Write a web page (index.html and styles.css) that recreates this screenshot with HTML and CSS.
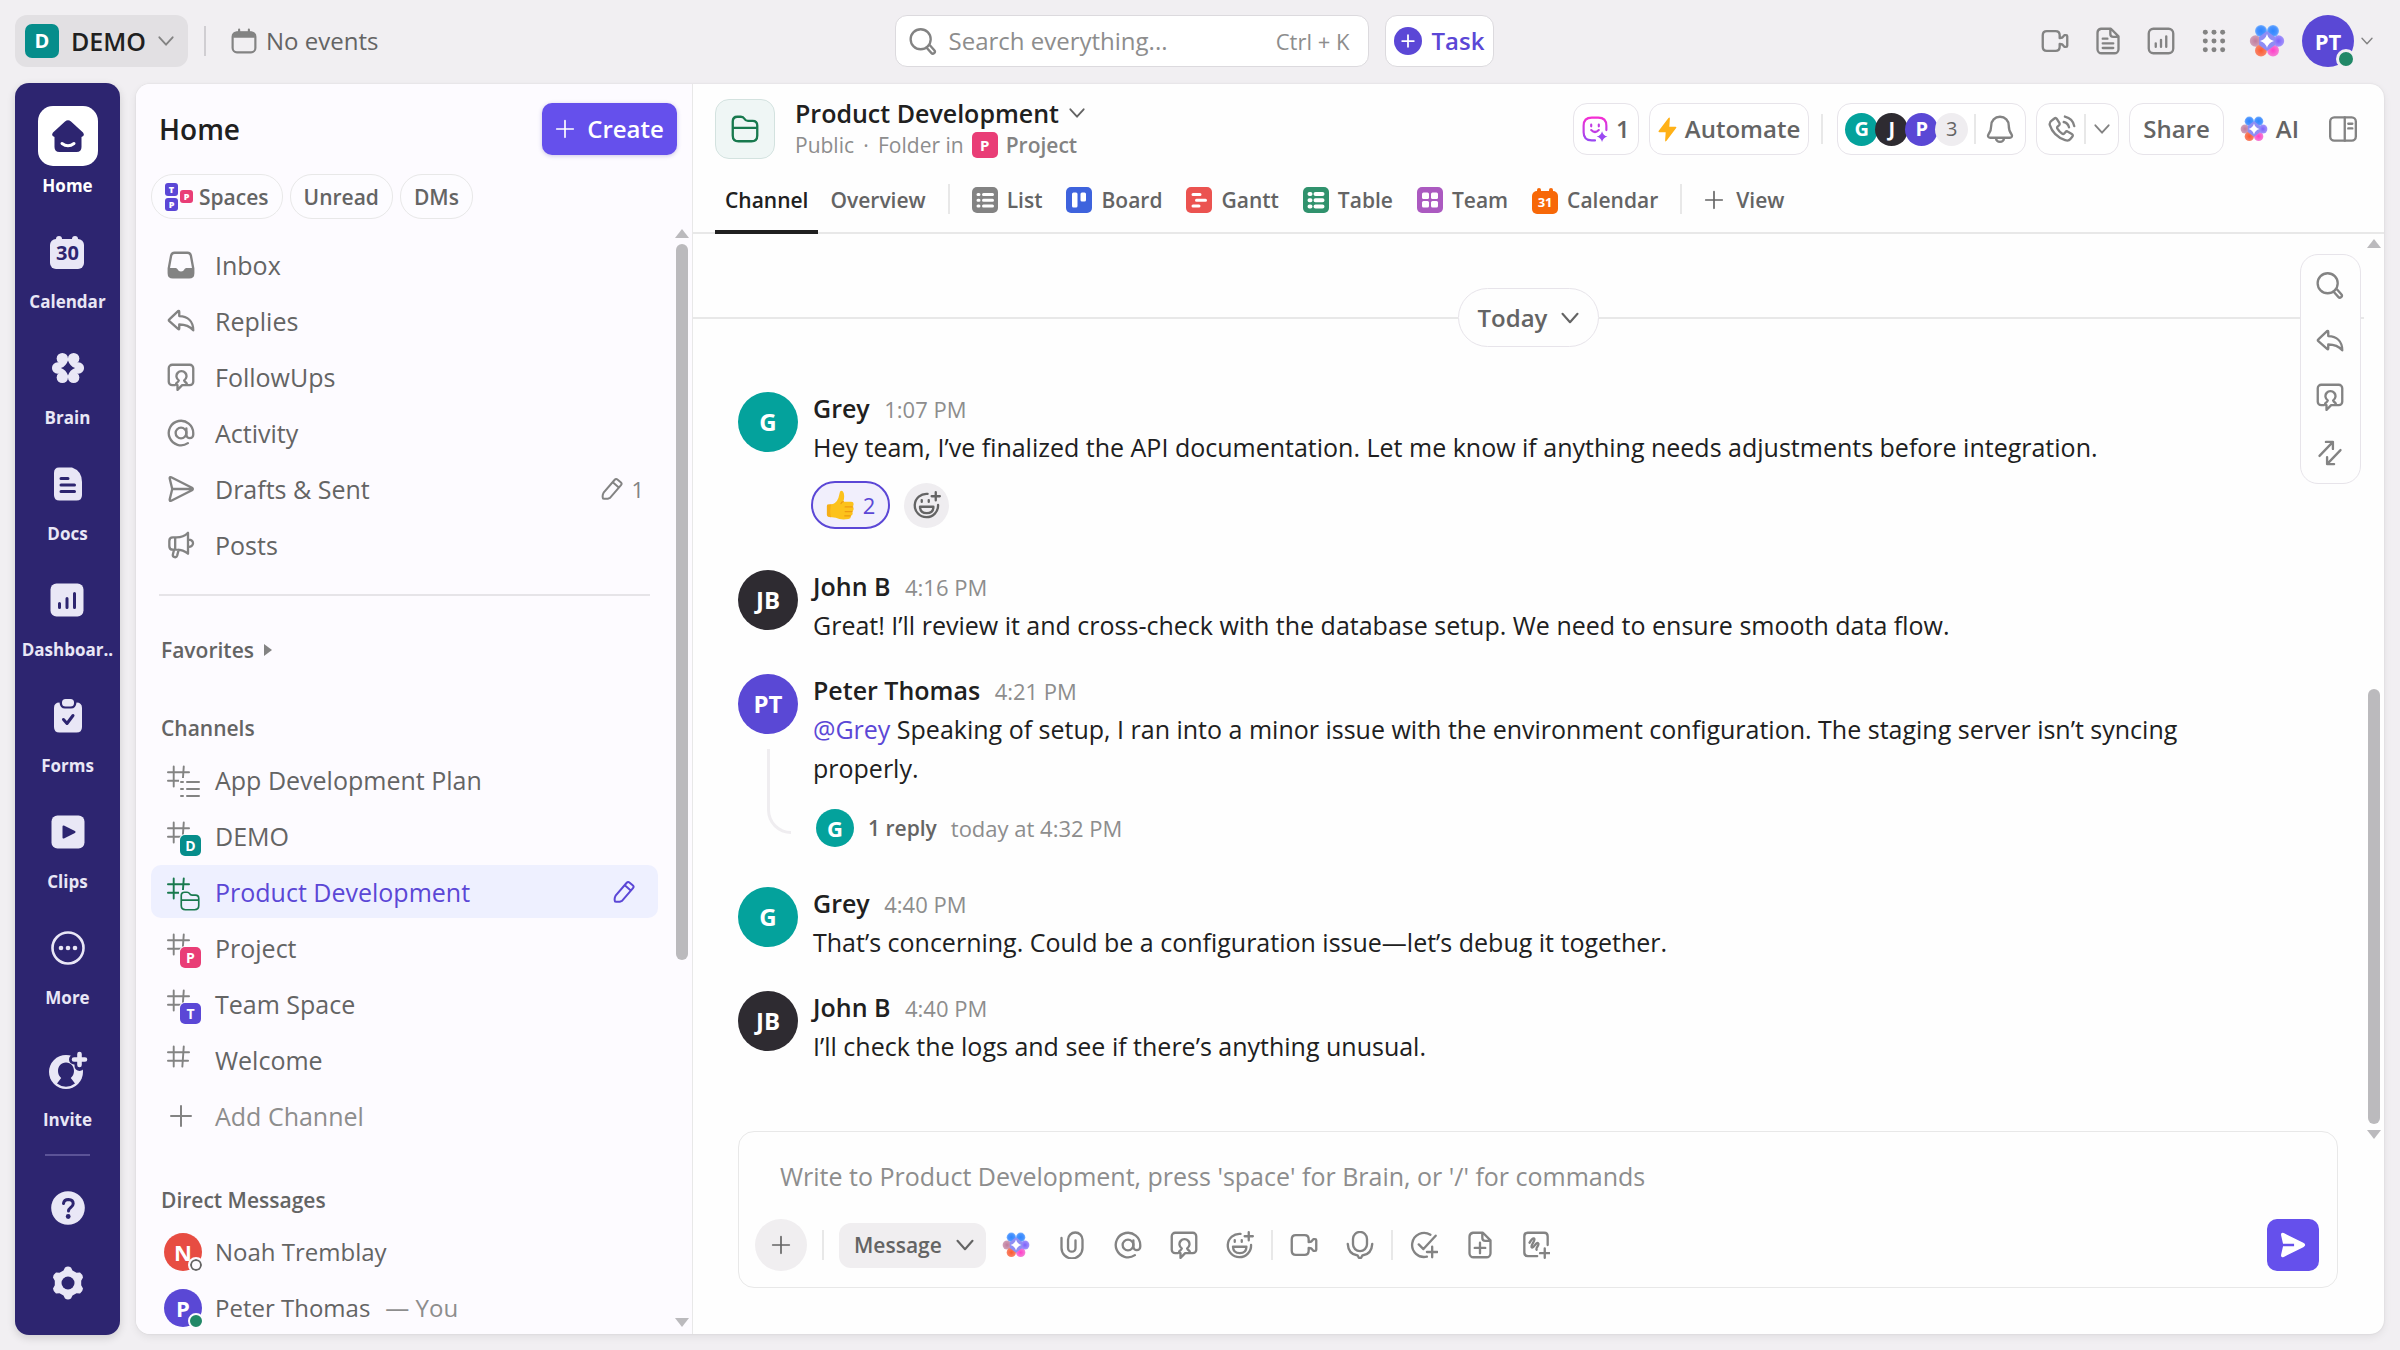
FILE: index.html
```html
<!DOCTYPE html>
<html lang="en">
<head>
<meta charset="utf-8">
<meta name="viewport" content="width=device-width, initial-scale=1">
<title>Product Development</title>
<link rel="stylesheet" href="styles.css">
</head>
<body>
<svg class="sprite" aria-hidden="true">
  <defs>
    <radialGradient id="g-blue"><stop offset="0" stop-color="#2f86ff"/><stop offset=".7" stop-color="#4a94ff"/><stop offset="1" stop-color="#7db4ff"/></radialGradient>
    <radialGradient id="g-violet"><stop offset="0" stop-color="#7d63fb"/><stop offset="1" stop-color="#a394fb"/></radialGradient>
    <radialGradient id="g-pink"><stop offset="0" stop-color="#ff3fc8"/><stop offset="1" stop-color="#f57fd6"/></radialGradient>
    <radialGradient id="g-orange"><stop offset="0" stop-color="#fb5a30"/><stop offset="1" stop-color="#f98468"/></radialGradient>
    <radialGradient id="g-mauve"><stop offset="0" stop-color="#c07b9c"/><stop offset="1" stop-color="#d0a0b8"/></radialGradient>
    <linearGradient id="g-face" x1="0" y1="0" x2="0" y2="1"><stop offset="0" stop-color="#f42fd3"/><stop offset="1" stop-color="#9a48f2"/></linearGradient>
  </defs>
  <symbol id="chevron" viewBox="0 0 12 12"><path d="M1 3.2l5 5.6 5-5.6"/></symbol>
  <symbol id="plus" viewBox="0 0 24 24"><path d="M12 2v20M2 12h20"/></symbol>
  <symbol id="calendar" viewBox="0 0 24 24"><rect x="1.5" y="4" width="21" height="18.5" rx="4"/><path class="fill" d="M2 9V7q0-3.500 3.500-3.500h13Q22 3.500 22 7v2z"/><path d="M7.500 1.500v4M16.500 1.500v4"/></symbol>
  <symbol id="search" viewBox="0 0 24 24"><circle cx="10" cy="10.500" r="8.600"/><path d="M15.500 18.200l3.600 4a1.700 1.700 0 0 0 2.600-2.300l-3.600-4"/></symbol>
  <symbol id="video" viewBox="0 0 24 24"><path d="M5 3.500h7.500q3.500 0 3.500 3.500v2.500l2.300-.5 1.700-2h1.500q1 0 1 1v8q0 1-1 1H20l-1.700-2-2.300-.5V17q0 3.500-3.500 3.500H5q-3.500 0-3.500-3.500V7Q1.500 3.500 5 3.500z"/></symbol>
  <symbol id="doc" viewBox="0 0 24 24"><path d="M6 1.500h8.500l6.500 6.500v11a3.500 3.500 0 0 1-3.500 3.500h-11A3.500 3.500 0 0 1 3 19V5a3.500 3.500 0 0 1 3-3.500zM14 2v4q0 2.500 2.500 2.500h4M7.500 10h4M7.500 14h9M7.500 18h9"/></symbol>
  <symbol id="chart" viewBox="0 0 24 24"><rect x="1.500" y="1.500" width="21" height="21" rx="4"/><path d="M7.500 17v-3M12 17v-6M16.500 17V8"/></symbol>
  <symbol id="grid" viewBox="0 0 24 24"><g class="fill"><circle cx="4" cy="4" r="2.300"/><circle cx="12" cy="4" r="2.300"/><circle cx="20" cy="4" r="2.300"/><circle cx="4" cy="12" r="2.300"/><circle cx="12" cy="12" r="2.300"/><circle cx="20" cy="12" r="2.300"/><circle cx="4" cy="20" r="2.300"/><circle cx="12" cy="20" r="2.300"/><circle cx="20" cy="20" r="2.300"/></g></symbol>
  <symbol id="brain" viewBox="0 0 36 36"><g stroke="none"><circle cx="6.500" cy="18" r="5.700" fill="url(#g-mauve)"/><circle cx="12" cy="27.500" r="6" fill="url(#g-orange)"/><circle cx="24" cy="27.500" r="6" fill="url(#g-pink)"/><circle cx="29.500" cy="18" r="5.700" fill="url(#g-violet)"/><circle cx="12" cy="8" r="6" fill="url(#g-blue)"/><circle cx="24" cy="8" r="6" fill="url(#g-blue)"/><path fill="#8f8df4" d="M18 8l8 6v8l-8 6-8-6v-8z"/><path fill="#fff" d="M18 11q1.500 5.500 7 7-5.500 1.500-7 7-1.500-5.500-7-7 5.500-1.500 7-7z"/></g></symbol>
  <symbol id="at" viewBox="0 0 24 24"><circle cx="12" cy="12" r="4.600"/><path d="M16.600 8v5.500a2.900 2.900 0 0 0 5.900 0V12a10.500 10.500 0 1 0-4.600 8.700"/></symbol>
  <symbol id="follow" viewBox="0 0 24 24"><path d="M6.500 19H4.500a3 3 0 0 1-3-3V4.500a3 3 0 0 1 3-3h15a3 3 0 0 1 3 3V16a3 3 0 0 1-3 3H13l-4 4v-4c-1.600 0-1.500-1.500-.5-2.100 1-.7 1.500-1.200 1.600-2A4.300 4.300 0 1 1 14.700 14.900c.2.800.8 1.300 1.700 2 .9.700.7 2.100-.6 2.100"/></symbol>
  <symbol id="reply" viewBox="0 0 24 24"><path d="M9.500 3.500q1-.6 1 .8v3.500c7 .2 12 4.200 12 12.200-3-3.500-6-5-12-5v3.200q0 1.400-1 .6L2 12.200q-.9-.8 0-1.600z"/></symbol>
  <symbol id="sent" viewBox="0 0 24 24"><path d="M2.300 3q-.2-1.600 1.300-1L21.400 11q1.500 1 0 2L3.600 22q-1.500.6-1.300-1L4.500 12zM4.500 12h17"/></symbol>
  <symbol id="posts" viewBox="0 0 24 24"><path d="M8 5.500c4 0 7.200-1 10-4v18c-2.800-2.500-6-3.500-10-3.500H5q-3 0-3-3V8.500q0-3 3-3zM7 5.500V16M18 7.500c2.500-.4 4.300 1 4.300 3s-1.800 3.400-4.300 3M6 16l-1 4.300a1.900 1.900 0 0 0 3.700.8l1.300-5"/></symbol>
  <symbol id="inbox" viewBox="0 0 24 24"><path d="M6.500 1.500h11q2.500 0 3 2.500l2 11v4q0 3.500-3.500 3.500H5Q1.500 22.500 1.500 19v-4l2-11q.5-2.500 3-2.500z"/><path class="fill" d="M1.500 14.500h6q1.200 0 1.700 1.300.6 1.700 2.800 1.700t2.800-1.700q.5-1.300 1.700-1.300h6V19q0 3.500-3.500 3.500H5Q1.500 22.500 1.500 19z"/></symbol>
  <symbol id="pencil" viewBox="0 0 24 24"><path d="M3 21.500q-1-3 .6-5.800L14.500 3q1.500-1.700 3.200-.3l3 2.500q1.700 1.400.3 3L10 20.800Q6.500 22.500 3 21.500zM12.800 5.200l5.700 5"/></symbol>
  <symbol id="hash" viewBox="0 0 24 24"><path d="M7 1.500v21M17.500 1.500l-1.500 21M1 7.500h22M1 16.500h21"/></symbol>
  <symbol id="list" viewBox="0 0 20 20"><path d="M7 3h12M7 10h12M7 17h12M1 3h2M1 10h2M1 17h2"/></symbol>
  <symbol id="folder" viewBox="0 0 24 24"><path d="M1.500 17.500V5.500q0-4 4-4h3q2 0 3 1.700 1 1.800 3 1.800h4q4 0 4 4v8.500q0 5-5 5h-11q-5 0-5-5zM1.500 11h21"/></symbol>
  <symbol id="face" viewBox="0 0 24 24"><path stroke="url(#g-face)" d="M12 22.500h-3q-7.500 0-7.500-7.500V9q0-7.500 7.500-7.500h6q7.500 0 7.500 7.500v4"/><path stroke="#c13ce4" d="M8.500 8v1.500M15.500 8v1.500M8.500 13q3.500 3.500 7 0"/><path fill="#9a48f2" stroke="none" d="M18.500 14q1 4 5 5-4 1-5 5-1-4-5-5 4-1 5-5z"/></symbol>
  <symbol id="bolt" viewBox="0 0 20 26"><path fill="#ffb117" stroke="none" d="M11 .8q1.500-1.300 1.500.8l-.6 8.400h6.500q1.500.2.700 1.500L9 24.800q-1.500 1.700-1.500-.5l.6-8.300H1.500Q0 15.700.8 14.400z"/></symbol>
  <symbol id="bell" viewBox="0 0 24 24"><path d="M12 1.500c-4.500 0-7.500 3.500-7.500 7.500 0 4-.8 5.500-2.300 7.500-1 1.500-.5 3 1.300 3h17c1.800 0 2.300-1.500 1.300-3-1.500-2-2.300-3.500-2.300-7.500 0-4-3-7.500-7.500-7.500zM8.500 20q.5 3 3.500 3t3.500-3"/></symbol>
  <symbol id="phone" viewBox="0 0 24 24"><path d="M3.500 4.500 5.500 3q1.300-1 2.200.5l2 3.200q.7 1.300-.3 2.200l-1.200 1q-.8.900 0 2 1.500 2.500 3.800 4 1 .7 1.900 0l1-1.200q1-1.200 2.200-.4l3.300 2q1.500 1 .4 2.300l-1.600 2q-1.500 2-4.500 1Q4.500 18 1.500 8.500q-.5-2.500 2-4zM13.500 6q3.500.8 4.500 4.500M14.500 1.300q6.800 1.500 8 8.200"/></symbol>
  <symbol id="panel" viewBox="0 0 24 24"><rect x="1" y="2" width="22" height="20" rx="3.500"/><path d="M13.500 2v20M16.500 7.500h3.500M16.500 11.500h3.500"/></symbol>
  <symbol id="swap" viewBox="0 0 24 24"><path d="M3 14.500 14.500 2.500M8.500 2.500h6v6M21 9.500 9.500 21.500M15.500 21.500h-6v-6"/></symbol>
  <symbol id="clip" viewBox="0 0 24 24"><path d="M3 6v8.500a9 9 0 0 0 18 0V7.500a6.200 6.200 0 0 0-12.400 0v7a3.200 3.200 0 0 0 6.400 0V8"/></symbol>
  <symbol id="smile" viewBox="0 0 24 24"><path d="M12.500 2.500A10 10 0 1 0 21.500 12M7.500 7.800v1.500M13.500 7.800v1.500M6 13.500h11.500q0 5.500-5.700 5.500T6 13.500zM19.500 1v7M16 4.500h7"/></symbol>
  <symbol id="mic" viewBox="0 0 24 24"><rect x="6" y=".8" width="12" height="16.500" rx="6"/><path d="M1.500 11q.5 9 8.500 10l1 2h2l1-2q8-1 8.500-10"/></symbol>
  <symbol id="taskplus" viewBox="0 0 24 24"><path d="M14.500 22A10.300 10.300 0 1 1 17.500 3.200M7.500 11.500l4 4L22 4M19 13.500v9M14.500 18h9"/></symbol>
  <symbol id="docplus" viewBox="0 0 24 24"><path d="M6 1.500h8.500L21 8v11a3.500 3.500 0 0 1-3.500 3.500h-11A3.500 3.500 0 0 1 3 19V5a3.500 3.500 0 0 1 3-3.500zM14 2v4q0 2.500 2.500 2.500h4M12 10v9M7.500 14.500h9"/></symbol>
  <symbol id="board-plus" viewBox="0 0 24 24"><path d="M22 12V4.500q0-3-3-3h-14q-3 0-3 3v14q0 3 3 3h8M6.500 10q2.500-4.500 4-3.500c1.500 1.200-3.500 6-2.200 7.500s4-5 5.500-3.500-2.300 4-1.300 5.500M19.500 15v8M15.500 19h8"/></symbol>
  <symbol id="send-solid" viewBox="0 0 24 24"><path class="fill" stroke="none" d="M1 3Q.6-.2 3.500 1L21.500 10q3.500 2 0 4L3.500 23Q.6 24.200 1 21l1.800-7.800H13v-2.400H2.800z"/></symbol>
  <symbol id="home" viewBox="0 0 34 34"><path fill="#2d2570" stroke="none" d="M14 2.500q3-2.500 6 0L32 13.500q2.300 3.500-1.500 4.500v10q0 5-5 5h-17q-5 0-5-5V18Q-.3 17 2 13.500z"/><path stroke="#fff" stroke-width="3" d="M11 24.500q6 4.500 12 0"/></symbol>
  <symbol id="r-brain" viewBox="0 0 36 36"><g class="fill"><circle cx="7" cy="18" r="6"/><circle cx="12" cy="8" r="6"/><circle cx="24" cy="8" r="6"/><circle cx="29" cy="18" r="6"/><circle cx="12" cy="28" r="6"/><circle cx="24" cy="28" r="6"/><path d="M12 8h12l6 10-6 10H12L6 18z"/></g><path fill="#2d2570" stroke="none" d="M18 10q2 6 7.500 8-5.500 2-7.500 8-2-6-7.500-8 5.500-2 7.500-8z"/></symbol>
  <symbol id="r-doc" viewBox="0 0 34 34"><path class="fill" d="M8 .5h13Q31 4 31 15v13q0 5.500-5.500 5.500h-17Q3 33.500 3 28V6Q3 .5 8 .5z"/><path class="cut" d="M10 11.500h7M10 18h13.500M10 24.500h13.500"/></symbol>
  <symbol id="r-dash" viewBox="0 0 34 34"><rect class="fill" x=".5" y=".5" width="33" height="33" rx="6"/><path class="cut" d="M9.500 24.500v-4M17 24.500v-9M24.500 24.500v-14"/></symbol>
  <symbol id="r-form" viewBox="0 0 34 34"><path class="fill" d="M8.500 3.500q.5 6 5.500 6h6q5 0 5.500-6Q31 3.500 31 9v19q0 5.500-5.500 5.500h-17Q3 33.500 3 28V9q0-5.500 5.500-5.500z"/><rect class="fill" x="11" y="0" width="12" height="7.500" rx="3.500"/><path class="cut" d="M12.500 20.500l3.500 4 6-8"/></symbol>
  <symbol id="r-clip" viewBox="0 0 34 34"><rect class="fill" x=".5" y=".5" width="33" height="33" rx="6"/><path fill="#2d2570" stroke="#2d2570" stroke-width="2" d="M12.500 11.500l11 5.500-11 5.500z"/></symbol>
  <symbol id="r-more" viewBox="0 0 34 34"><circle cx="17" cy="17" r="15.500" fill="none" stroke="#e9e7f6" stroke-width="2.600"/><g class="fill"><circle cx="10" cy="17" r="2.300"/><circle cx="17" cy="17" r="2.300"/><circle cx="24" cy="17" r="2.300"/></g></symbol>
  <symbol id="r-invite" viewBox="0 0 40 40"><circle class="fill" cx="18" cy="22" r="17"/><path fill="#2d2570" stroke="none" d="M18 12.500c-5 0-8 4-8 8.500 0 3 1.200 5.200 3.200 7L9 33.500q4 3.200 9 3.200t9-3.200L22.800 28c2-1.800 3.200-4 3.200-7 0-4.500-3-8.500-8-8.500z"/><path stroke="#2d2570" stroke-width="10" d="M31.500 4v12M26 9.500h12"/><path stroke="#e9e7f6" stroke-width="4.600" d="M31.500 4v11M26 9.500h11"/></symbol>
  <symbol id="r-help" viewBox="0 0 34 34"><circle class="fill" cx="17" cy="17" r="16.800"/><path class="cut" d="M12.500 12.500q.5-4 5-4 4.700.3 4.700 4.200c0 3.500-4.700 3.800-4.700 7.300"/><circle cx="17.200" cy="25.500" r="2.400" fill="#2d2570" stroke="none"/></symbol>
  <symbol id="r-gear" viewBox="0 0 34 34"><path class="fill" d="M14 1.500q3-2 6 0l1.500 3 4 2.200 3.500-.2q2.800 2 3 5l-1.800 3.200v4.600L32 22.500q-.2 3-3 5l-3.500-.2-4 2.200-1.500 3q-3 2-6 0l-1.500-3-4-2.200-3.500.2q-2.800-2-3-5l1.800-3.200v-4.600L2 11.500q.2-3 3-5l3.500.2 4-2.200z"/><circle cx="17" cy="17" r="6.500" fill="#2d2570" stroke="none"/></symbol>
  <symbol id="thumb" viewBox="0 0 30 32"><g stroke="none"><path fill="#fcc21b" d="M14.500 1.500q3-2 4 2 1 4.500-.5 9h8.500q2.500 0 2.500 2.500t-1.500 2.800q1.800.6 1.500 2.700t-2 2.500q1.200.8.900 2.500t-2 2q.8 3-2.400 3.500-8 1.500-13.500-1.300L2 28.500q-1.500-.3-1.500-2V17q0-1.500 1.500-1.500l5-.5q5.500-3 6.500-9.500z"/><path fill="#f09a12" d="M2 15.500Q.5 15.500.5 17v9.500q0 1.700 1.500 2l3 .8q-2-6 0-14z" opacity=".5"/><path fill="none" stroke="#ed9a10" stroke-width="1.300" d="M20 18h8M20 23h7.500M19.500 27.500h6M18 12.500q-2 .3-2.500 2"/></g></symbol>
  <symbol id="v-list" viewBox="0 0 26 26"><rect width="26" height="26" rx="5" fill="#838383" stroke="none"/><path stroke="#fff" stroke-width="3" d="M6 7.500h1M6 13.200h1M6 19h1M11.500 7.500h9M11.500 13.200h9M11.500 19h9"/></symbol>
  <symbol id="v-board" viewBox="0 0 26 26"><rect width="26" height="26" rx="5" fill="#3e63dd" stroke="none"/><path fill="#fff" stroke="none" d="M6 7q0-1.500 1.500-1.500h2.500q1.500 0 1.500 1.500v12q0 1.500-1.500 1.500H7.500Q6 20.500 6 19zM14.500 7q0-1.500 1.500-1.500h2.500q1.500 0 1.500 1.500v6q0 1.500-1.500 1.500H16q-1.500 0-1.500-1.500z"/></symbol>
  <symbol id="v-gantt" viewBox="0 0 26 26"><rect width="26" height="26" rx="5" fill="#eb5350" stroke="none"/><path stroke="#fff" stroke-width="3" d="M7 7.500h7M10.500 13.200h9M7 19h6"/></symbol>
  <symbol id="v-table" viewBox="0 0 26 26"><rect width="26" height="26" rx="5" fill="#30926d" stroke="none"/><path stroke="#fff" stroke-width="4" d="M6.500 7h1M12.500 7h7M6.500 13.200h1M12.500 13.200h7M6.500 19.500h1M12.500 19.500h7"/></symbol>
  <symbol id="v-team" viewBox="0 0 26 26"><rect width="26" height="26" rx="5" fill="#ab5ac0" stroke="none"/><g fill="#fff" stroke="none"><rect x="5" y="5.500" width="7" height="6.500" rx="1.500"/><rect x="14" y="5.500" width="7" height="6.500" rx="1.500"/><rect x="5" y="14" width="7" height="6.500" rx="1.500"/><rect x="14" y="14" width="7" height="6.500" rx="1.500"/></g></symbol>
</svg>

<header class="topbar">
  <div class="topbar-left">
    <button class="workspace" type="button"><span class="badge badge-teal badge-lg">D</span><span>DEMO</span><svg class="ico chev-lg"><use href="#chevron"/></svg></button>
    <span class="vline"></span>
    <a class="events" href="#events"><svg class="ico ico-26"><use href="#calendar"/></svg>No events</a>
  </div>
  <div class="topbar-mid">
    <label class="search"><svg class="ico ico-28"><use href="#search"/></svg><input type="search" placeholder="Search everything..." aria-label="Search everything"><span class="kbd">Ctrl + K</span></label>
    <button class="task" type="button"><span class="task-dot"><svg class="ico"><use href="#plus"/></svg></span>Task</button>
  </div>
  <nav class="topbar-right" aria-label="Tools">
    <button class="tool" type="button" aria-label="Video"><svg class="ico ico-28"><use href="#video"/></svg></button>
    <button class="tool" type="button" aria-label="Docs"><svg class="ico ico-28"><use href="#doc"/></svg></button>
    <button class="tool" type="button" aria-label="Reports"><svg class="ico ico-28"><use href="#chart"/></svg></button>
    <button class="tool" type="button" aria-label="Apps"><svg class="ico ico-26"><use href="#grid"/></svg></button>
    <button class="tool" type="button" aria-label="Brain"><svg class="ico ico-36"><use href="#brain"/></svg></button>
    <button class="account" type="button" aria-label="Account"><span class="avatar avatar-md violet">PT<i class="status status-lg"></i></span><svg class="ico chev-sm"><use href="#chevron"/></svg></button>
  </nav>
</header>

<div class="shell">
  <nav class="rail" aria-label="Main">
    <a class="rail-item current" href="#home"><span class="rail-tile"><svg class="ico ico-34"><use href="#home"/></svg></span>Home</a>
    <a class="rail-item" href="#calendar-view"><span class="rail-tile"><span class="rail-cal">30</span></span>Calendar</a>
    <a class="rail-item" href="#brain-view"><span class="rail-tile"><svg class="ico ico-34"><use href="#r-brain"/></svg></span>Brain</a>
    <a class="rail-item" href="#docs"><span class="rail-tile"><svg class="ico ico-34"><use href="#r-doc"/></svg></span>Docs</a>
    <a class="rail-item" href="#dashboards"><span class="rail-tile"><svg class="ico ico-34"><use href="#r-dash"/></svg></span>Dashboar..</a>
    <a class="rail-item" href="#forms"><span class="rail-tile"><svg class="ico ico-34"><use href="#r-form"/></svg></span>Forms</a>
    <a class="rail-item" href="#clips"><span class="rail-tile"><svg class="ico ico-34"><use href="#r-clip"/></svg></span>Clips</a>
    <a class="rail-item" href="#more"><span class="rail-tile"><svg class="ico ico-34"><use href="#r-more"/></svg></span>More</a>
    <a class="rail-item invite" href="#invite"><span class="rail-tile"><svg class="ico ico-40"><use href="#r-invite"/></svg></span>Invite</a>
    <span class="rail-line"></span>
    <a class="rail-util" href="#help" aria-label="Help"><svg class="ico ico-34"><use href="#r-help"/></svg></a>
    <a class="rail-util" href="#settings" aria-label="Settings"><svg class="ico ico-34"><use href="#r-gear"/></svg></a>
  </nav>

  <div class="panel">
    <aside class="sidebar">
      <div class="side-head"><h1>Home</h1><button class="create" type="button"><svg class="ico"><use href="#plus"/></svg>Create</button></div>
      <div class="pills">
        <button class="pill" type="button"><span class="space-stack"><span class="space-col"><b>T</b><b>P</b></span><b class="rose">P</b></span>Spaces</button>
        <button class="pill" type="button">Unread</button>
        <button class="pill" type="button">DMs</button>
      </div>
      <div class="side-body">
        <div class="side-list">
          <nav class="rows" aria-label="Home">
            <a class="row" href="#inbox-view"><span class="row-ico"><svg class="ico ico-28"><use href="#inbox"/></svg></span>Inbox</a>
            <a class="row" href="#replies"><span class="row-ico"><svg class="ico ico-28"><use href="#reply"/></svg></span>Replies</a>
            <a class="row" href="#followups"><span class="row-ico"><svg class="ico ico-28"><use href="#follow"/></svg></span>FollowUps</a>
            <a class="row" href="#activity"><span class="row-ico"><svg class="ico ico-28"><use href="#at"/></svg></span>Activity</a>
            <a class="row" href="#drafts"><span class="row-ico"><svg class="ico ico-28"><use href="#sent"/></svg></span>Drafts &amp; Sent<span class="row-end"><svg class="ico ico-24"><use href="#pencil"/></svg>1</span></a>
            <a class="row" href="#posts-view"><span class="row-ico"><svg class="ico ico-28"><use href="#posts"/></svg></span>Posts</a>
          </nav>
          <hr class="side-line">
          <h2 class="side-title">Favorites <i class="caret"></i></h2>
          <h2 class="side-title">Channels</h2>
          <nav class="rows" aria-label="Channels">
            <a class="row" href="#app"><span class="row-ico"><svg class="ico hash"><use href="#hash"/></svg><svg class="ico sub sub-pad"><use href="#list"/></svg></span>App Development Plan</a>
            <a class="row" href="#demo"><span class="row-ico"><svg class="ico hash"><use href="#hash"/></svg><span class="badge badge-sm sub badge-teal">D</span></span>DEMO</a>
            <a class="row selected" href="#product"><span class="row-ico"><svg class="ico hash"><use href="#hash"/></svg><svg class="ico sub sub-folder"><use href="#folder"/></svg></span>Product Development<span class="row-end"><svg class="ico ico-24"><use href="#pencil"/></svg></span></a>
            <a class="row" href="#project"><span class="row-ico"><svg class="ico hash"><use href="#hash"/></svg><span class="badge badge-sm sub badge-rose">P</span></span>Project</a>
            <a class="row" href="#team-space"><span class="row-ico"><svg class="ico hash"><use href="#hash"/></svg><span class="badge badge-sm sub badge-violet">T</span></span>Team Space</a>
            <a class="row" href="#welcome"><span class="row-ico"><svg class="ico hash"><use href="#hash"/></svg></span>Welcome</a>
            <a class="row faint" href="#add"><span class="row-ico"><svg class="ico ico-24"><use href="#plus"/></svg></span>Add Channel</a>
          </nav>
          <h2 class="side-title">Direct Messages</h2>
          <nav class="rows" aria-label="Direct messages">
            <a class="row person" href="#noah"><span class="avatar avatar-sm red">N<i class="status status-off"></i></span>Noah Tremblay</a>
            <a class="row person" href="#peter"><span class="avatar avatar-sm violet">P<i class="status"></i></span>Peter Thomas <span class="you">— You</span></a>
          </nav>
        </div>
        <div class="scrollbar side-scroll" aria-hidden="true"><i class="arrow-up"></i><span class="track"><span class="thumb thumb-side"></span></span><i class="arrow-down"></i></div>
      </div>
    </aside>

    <main class="main">
      <header class="main-head">
        <div class="title-row">
          <span class="folder-tile"><svg class="ico ico-28"><use href="#folder"/></svg></span>
          <div class="titles">
            <button class="title" type="button">Product Development<svg class="ico chev-lg"><use href="#chevron"/></svg></button>
            <p class="crumbs">Public <span class="dot">·</span> Folder in <span class="badge badge-rose badge-md">P</span><a href="#project">Project</a></p>
          </div>
          <div class="actions">
            <button class="box" type="button"><svg class="ico ico-26"><use href="#face"/></svg>1</button>
            <button class="box" type="button"><svg class="ico bolt"><use href="#bolt"/></svg>Automate</button>
            <span class="vline"></span>
            <div class="box people"><button class="faces" type="button" aria-label="Members"><span class="avatar avatar-xs teal">G</span><span class="avatar avatar-xs dark">J</span><span class="avatar avatar-xs violet">P</span><span class="avatar avatar-xs count">3</span></button><span class="vline"></span><button class="bell" type="button" aria-label="Notifications"><svg class="ico ico-28"><use href="#bell"/></svg></button></div>
            <div class="box call"><button class="bell" type="button" aria-label="Call"><svg class="ico ico-28"><use href="#phone"/></svg></button><span class="vline"></span><button class="bell" type="button" aria-label="Call options"><svg class="ico chev-lg"><use href="#chevron"/></svg></button></div>
            <button class="box share" type="button">Share</button>
            <button class="plain" type="button"><svg class="ico ico-28"><use href="#brain"/></svg>AI</button>
            <button class="plain" type="button" aria-label="Toggle panel"><svg class="ico ico-28"><use href="#panel"/></svg></button>
          </div>
        </div>
        <nav class="tabs" aria-label="Views">
          <a class="tab active" href="#channel">Channel</a>
          <a class="tab" href="#overview">Overview</a>
          <span class="vline"></span>
          <a class="tab" href="#list-view"><svg class="ico ico-26"><use href="#v-list"/></svg>List</a>
          <a class="tab" href="#board-view"><svg class="ico ico-26"><use href="#v-board"/></svg>Board</a>
          <a class="tab" href="#gantt-view"><svg class="ico ico-26"><use href="#v-gantt"/></svg>Gantt</a>
          <a class="tab" href="#table-view"><svg class="ico ico-26"><use href="#v-table"/></svg>Table</a>
          <a class="tab" href="#team-view"><svg class="ico ico-26"><use href="#v-team"/></svg>Team</a>
          <a class="tab" href="#cal-view"><span class="cal-ico">31</span>Calendar</a>
          <span class="vline"></span>
          <button class="tab" type="button"><svg class="ico tab-plus"><use href="#plus"/></svg>View</button>
        </nav>
      </header>

      <div class="feed">
        <div class="feed-scroll">
          <div class="day"><button class="day-pill" type="button">Today<svg class="ico chev-xl"><use href="#chevron"/></svg></button></div>
          <div class="messages">
            <article class="msg">
              <div class="msg-side"><span class="avatar avatar-lg teal">G</span></div>
              <div class="msg-body"><h3>Grey <time>1:07 PM</time></h3><p>Hey team, I’ve finalized the API documentation. Let me know if anything needs adjustments before integration.</p>
                <div class="reactions"><button class="reaction" type="button"><svg class="ico thumb-ico"><use href="#thumb"/></svg>2</button><button class="react" type="button" aria-label="Add reaction"><svg class="ico ico-28"><use href="#smile"/></svg></button></div></div>
            </article>
            <article class="msg">
              <div class="msg-side"><span class="avatar avatar-lg dark">JB</span></div>
              <div class="msg-body"><h3>John B <time>4:16 PM</time></h3><p>Great! I’ll review it and cross-check with the database setup. We need to ensure smooth data flow.</p></div>
            </article>
            <article class="msg">
              <div class="msg-side"><span class="avatar avatar-lg violet">PT</span><span class="thread-line"></span></div>
              <div class="msg-body"><h3>Peter Thomas <time>4:21 PM</time></h3><p><a href="#grey">@Grey</a> Speaking of setup, I ran into a minor issue with the environment configuration. The staging server isn’t syncing properly.</p>
                <button class="thread" type="button"><span class="avatar avatar-sm teal">G</span><b>1 reply</b><span>today at 4:32 PM</span></button></div>
            </article>
            <article class="msg">
              <div class="msg-side"><span class="avatar avatar-lg teal">G</span></div>
              <div class="msg-body"><h3>Grey <time>4:40 PM</time></h3><p>That’s concerning. Could be a configuration issue—let’s debug it together.</p></div>
            </article>
            <article class="msg">
              <div class="msg-side"><span class="avatar avatar-lg dark">JB</span></div>
              <div class="msg-body"><h3>John B <time>4:40 PM</time></h3><p>I’ll check the logs and see if there’s anything unusual.</p></div>
            </article>
          </div>
        </div>
        <div class="scrollbar feed-bar" aria-hidden="true"><i class="arrow-up"></i><span class="track track-end"><span class="thumb thumb-feed"></span></span><i class="arrow-down"></i></div>
        <div class="float-tools">
          <button type="button" aria-label="Search channel"><svg class="ico ico-28"><use href="#search"/></svg></button>
          <button type="button" aria-label="Replies"><svg class="ico ico-28"><use href="#reply"/></svg></button>
          <button type="button" aria-label="FollowUps"><svg class="ico ico-28"><use href="#follow"/></svg></button>
          <button type="button" aria-label="Sync"><svg class="ico ico-28"><use href="#swap"/></svg></button>
        </div>
      </div>

      <form class="composer">
        <textarea rows="1" aria-label="Message" placeholder="Write to Product Development, press 'space' for Brain, or '/' for commands"></textarea>
        <div class="composer-bar">
          <button class="add" type="button" aria-label="Add"><svg class="ico"><use href="#plus"/></svg></button>
          <span class="vline"></span>
          <label class="kind"><select aria-label="Post type"><option>Message</option><option>Post</option></select><svg class="ico chev-xl"><use href="#chevron"/></svg></label>
          <button type="button" aria-label="Brain"><svg class="ico ico-28"><use href="#brain"/></svg></button>
          <button type="button" aria-label="Attach"><svg class="ico ico-28"><use href="#clip"/></svg></button>
          <button type="button" aria-label="Mention"><svg class="ico ico-28"><use href="#at"/></svg></button>
          <button type="button" aria-label="FollowUp"><svg class="ico ico-28"><use href="#follow"/></svg></button>
          <button type="button" aria-label="Emoji"><svg class="ico ico-28"><use href="#smile"/></svg></button>
          <span class="vline tight"></span>
          <button type="button" aria-label="Record video"><svg class="ico ico-28"><use href="#video"/></svg></button>
          <button type="button" aria-label="Record audio"><svg class="ico ico-28"><use href="#mic"/></svg></button>
          <span class="vline tight"></span>
          <button type="button" aria-label="Add task"><svg class="ico ico-28"><use href="#taskplus"/></svg></button>
          <button type="button" aria-label="Add doc"><svg class="ico ico-28"><use href="#docplus"/></svg></button>
          <button type="button" aria-label="Add whiteboard"><svg class="ico ico-28"><use href="#board-plus"/></svg></button>
          <button class="send" type="submit" aria-label="Send"><svg class="ico ico-26"><use href="#send-solid"/></svg></button>
        </div>
      </form>
    </main>
  </div>
</div>
</body>
</html>
```

FILE: styles.css
```css
:root {
  --ink: #202020;
  --text: #646464;
  --icon: #838383;
  --faint: #8d8d8d;
  --line: #e8e8e8;
  --violet: #5b47d6;
  --navy: #2d2570;
}
* { box-sizing: border-box; }
body {
  margin: 0;
  height: 100vh;
  display: flex;
  flex-direction: column;
  overflow: hidden;
  background: #f1eff2;
  color: var(--text);
  font: 400 25px/32px "Open Sans", "Noto Sans", sans-serif;
}
button, input, textarea, select { font: inherit; color: inherit; }
button { display: flex; align-items: center; justify-content: center; padding: 0; border: 0; background: none; white-space: nowrap; }
a { color: inherit; text-decoration: none; }
h1, h2, h3, p { margin: 0; font-size: inherit; font-weight: inherit; }
.sprite { position: absolute; width: 0; height: 0; }

/* Icons */
.ico { flex: none; width: 20px; height: 20px; fill: none; stroke: currentColor; stroke-width: 2; stroke-linecap: round; stroke-linejoin: round; }
.fill { fill: currentColor; stroke: none; }
.cut { stroke: var(--navy); stroke-width: 3; }
.ico-24 { width: 24px; height: 24px; }
.ico-26 { width: 26px; height: 26px; }
.ico-28 { width: 28px; height: 28px; }
.ico-34 { width: 34px; height: 34px; }
.ico-36 { width: 36px; height: 36px; }
.ico-40 { width: 40px; height: 40px; }
.chev-sm, .chev-lg, .chev-xl { stroke-width: 1.4; }
.chev-sm { width: 12px; height: 12px; }
.chev-lg { width: 16px; height: 16px; }
.chev-xl { width: 18px; height: 18px; }
.vline { flex: none; width: 2px; height: 30px; background: var(--line); }

/* Avatars and badges */
.avatar { position: relative; flex: none; display: flex; align-items: center; justify-content: center; border-radius: 50%; color: #fff; font-weight: 700; }
.avatar-xs { width: 33px; height: 33px; font-size: 20px; }
.avatar-sm { width: 38px; height: 38px; font-size: 22px; }
.avatar-md { width: 52px; height: 52px; font-size: 22px; }
.avatar-lg { width: 60px; height: 60px; font-size: 24px; }
.teal { background: #04a29c; }
.dark { background: #2e2b31; }
.violet { background: #5a48d5; }
.red { background: #e74c42; }
.count { background: #efedf0; color: var(--text); font-weight: 400; }
.status { position: absolute; right: -2px; bottom: -2px; width: 16px; height: 16px; border: 2px solid #fdfbff; border-radius: 50%; background: #218867; }
.status-off { background: #fdfbff; box-shadow: inset 0 0 0 2px var(--text); }
.status-lg { width: 20px; height: 20px; border: 3px solid #f1eff2; }
.badge { flex: none; display: flex; align-items: center; justify-content: center; border-radius: 5px; color: #fff; font-weight: 700; }
.badge-lg { width: 34px; height: 34px; border-radius: 7px; font-size: 20px; }
.badge-md { width: 26px; height: 26px; font-size: 15px; line-height: 26px; }
.badge-sm { width: 21px; height: 21px; font-size: 14px; line-height: 21px; }
.badge-teal { background: #068d8b; }
.badge-rose { background: #e93d76; }
.badge-violet { background: var(--violet); }

/* Top bar */
.topbar { flex: none; height: 83px; padding: 15px 27px 16px 15px; display: grid; grid-template-columns: 1fr auto 1fr; align-items: center; }
.topbar-left, .topbar-mid, .topbar-right { display: flex; align-items: center; gap: 16px; }
.topbar-right { justify-content: flex-end; gap: 17px; color: var(--icon); }
.workspace { height: 52px; padding: 0 14px 0 10px; gap: 12px; border-radius: 12px; background: #e2e0e3; color: var(--ink); font-size: 25px; font-weight: 600; }
.workspace .ico { color: var(--icon); }
.topbar-left .vline { background: #d0ced2; }
.events { display: flex; align-items: center; gap: 9px; padding-left: 9px; font-size: 24px; }
.events .ico { color: var(--icon); }
.search { width: 474px; height: 52px; padding: 0 18px 0 13px; display: flex; align-items: center; gap: 12px; border: 1px solid #dcdade; border-radius: 12px; background: #fff; color: var(--icon); }
.search input { flex: 1; min-width: 0; padding: 0; border: 0; outline: 0; background: none; font-size: 24px; }
.search input::placeholder, .composer textarea::placeholder { color: var(--faint); opacity: 1; }
.kbd { font-size: 22px; color: var(--faint); }
.task { width: 109px; height: 52px; gap: 10px; border: 1px solid #dcdade; border-radius: 12px; background: #fff; color: var(--violet); font-size: 24px; font-weight: 600; }
.task-dot { width: 28px; height: 28px; display: flex; align-items: center; justify-content: center; border-radius: 50%; background: var(--violet); color: #fff; }
.task-dot .ico { width: 14px; height: 14px; stroke-width: 3; }
.tool { width: 36px; height: 36px; }
.account { gap: 7px; }

/* Shell */
.shell { flex: 1; min-height: 0; display: flex; gap: 16px; padding: 0 16px 15px 15px; }
.rail { flex: none; width: 105px; padding-top: 23px; display: flex; flex-direction: column; align-items: center; border-radius: 14px; background: var(--navy); box-shadow: 0 3px 8px rgba(0, 0, 0, .14); color: #e9e7f6; }
.rail-item { display: flex; flex-direction: column; align-items: center; margin-bottom: 16px; font-size: 17px; line-height: 40px; font-weight: 700; }
.rail-item.current { color: #fff; }
.rail-item.invite { margin: 6px 0 14px; }
.rail-tile { width: 60px; height: 60px; display: flex; align-items: center; justify-content: center; border-radius: 15px; }
.current .rail-tile { background: #fff; }
.rail-cal, .cal-ico { position: relative; margin-top: 4px; text-align: center; }
.rail-cal { width: 34px; height: 30px; border-radius: 6px; background: #e9e7f6; color: var(--navy); font-size: 20px; line-height: 28px; }
.rail-cal::before, .cal-ico::before { content: ""; position: absolute; top: -3px; left: 6px; width: 6px; height: 7px; border-radius: 3px; background: #e9e7f6; }
.rail-cal::before { box-shadow: 16px 0 0 #e9e7f6; }
.rail-line { width: 45px; height: 2px; margin-bottom: 22px; background: #5b5397; }
.rail-util { width: 60px; height: 60px; margin-bottom: 15px; display: flex; align-items: center; justify-content: center; }
.panel { flex: 1; min-width: 0; margin: 1px 0 1px; display: flex; border-radius: 14px; background: #fefefe; box-shadow: 0 0 2px rgba(0, 0, 0, .1), 0 3px 8px rgba(0, 0, 0, .07); overflow: hidden; }

/* Sidebar */
.sidebar { flex: none; width: 557px; display: flex; flex-direction: column; border-right: 1px solid var(--line); background: #fdfbff; }
.side-head { display: flex; align-items: center; justify-content: space-between; padding: 19px 15px 0 23px; }
.side-head h1 { color: var(--ink); font-size: 28px; font-weight: 600; }
.create { width: 135px; height: 52px; gap: 12px; border-radius: 10px; background: #6550ec; color: #fff; font-size: 24px; font-weight: 600; box-shadow: 0 1px 4px rgba(60, 40, 160, .25); }
.pills { display: flex; gap: 7px; padding: 19px 15px 0; }
.pill { height: 45px; padding: 0 13px; border: 1px solid var(--line); border-radius: 22px; background: #fdfcff; font-size: 21px; font-weight: 600; }
.space-stack { display: flex; align-items: center; gap: 2px; margin-right: 6px; }
.space-col { display: grid; gap: 2px; }
.space-stack b { width: 13px; height: 13px; border-radius: 3px; background: var(--violet); color: #fff; font-size: 9px; line-height: 13px; text-align: center; }
.space-stack .rose { background: #e93d76; }
.side-body { flex: 1; min-height: 0; display: flex; padding-top: 10px; }
.side-list { flex: 1; min-width: 0; padding: 9px 18px 0 15px; overflow: hidden; }
.rows { display: grid; gap: 3px; }
.row { height: 53px; padding: 0 22px 0 16px; display: flex; align-items: center; gap: 20px; border-radius: 10px; white-space: nowrap; }
.row .row-ico { color: var(--icon); }
.row-ico { position: relative; flex: none; width: 28px; height: 28px; display: flex; align-items: center; }
.row-ico .ico-24 { margin-left: 2px; }
.row-end { margin-left: auto; display: flex; align-items: center; gap: 7px; font-size: 22px; }
.row:not(.selected) .row-end { margin-right: -8px; color: var(--icon); }
.row.selected { background: #eef0ff; color: var(--violet); }
.row.selected .row-ico { color: #18794e; }
.row.faint { color: var(--faint); }
.row.person { padding-left: 13px; gap: 13px; font-size: 24px; }
.hash { width: 23px; height: 23px; margin-bottom: 6px; }
.sub { position: absolute; left: 13px; top: 13px; box-shadow: 0 0 0 1px #fdfbff; }
.sub-pad, .sub-folder { width: 20px; height: 20px; background: #fdfbff; }
.sub-folder { background: #eef0ff; box-shadow: 0 0 0 1px #eef0ff; }
.you { margin-left: 2px; color: var(--faint); }
.side-line { margin: 23px 8px 34px; border: 0; height: 2px; background: #e6e4e8; }
.side-title { display: flex; align-items: center; height: 40px; margin: 38px 0 5px 10px; font-size: 21px; font-weight: 600; }
.side-line + .side-title { margin-top: 0; }
.caret { margin-left: 10px; border: 6px solid transparent; border-left: 8px solid var(--icon); border-right: 0; }

/* Scroll indicators */
.scrollbar { flex: none; width: 12px; display: flex; flex-direction: column; align-items: center; gap: 6px; }
.side-scroll { margin: 0 4px 7px 0; }
.feed-bar { margin: 5px 4px -8px 0; }
.arrow-up, .arrow-down { border: 7px solid transparent; }
.arrow-up { border-top: 0; border-bottom: 9px solid #bbbabd; }
.arrow-down { border-bottom: 0; border-top: 9px solid #bbbabd; }
.track { flex: 1; width: 100%; display: flex; flex-direction: column; }
.track-end { justify-content: flex-end; }
.thumb { border-radius: 6px; background: #bbbabd; }
.thumb-side { height: 67%; }
.thumb-feed { height: 50%; }

/* Main header */
.main { flex: 1; min-width: 0; display: flex; flex-direction: column; }
.main-head { flex: none; padding: 15px 22px 0; border-bottom: 2px solid var(--line); }
.title-row { display: flex; align-items: center; height: 60px; }
.folder-tile { width: 60px; height: 60px; display: flex; align-items: center; justify-content: center; border: 1px solid #d3e2df; border-radius: 14px; background: #eff6f5; color: #18794e; }
.titles { flex: 1; padding-left: 20px; }
.title { gap: 10px; color: var(--ink); font-weight: 600; }
.title .ico { color: var(--text); }
.crumbs { display: flex; align-items: center; gap: 8px; font-size: 21px; line-height: 32px; color: var(--faint); }
.crumbs a { color: var(--icon); font-weight: 600; }
.crumbs .dot { width: 8px; text-align: center; }
.actions { display: flex; align-items: center; gap: 10px; }
.box { height: 52px; padding: 0 8px; gap: 8px; display: flex; align-items: center; border: 1px solid #e7e4ea; border-radius: 14px; background: #fff; font-size: 24px; font-weight: 600; }
.actions > .vline { margin: 0 4px 0 2px; }
.bolt { width: 19px; height: 25px; }
.people { padding: 0 11px 0 7px; gap: 6px; }
.faces .avatar + .avatar { margin-left: -3px; }
.bell { color: var(--icon); }
.people .bell { padding-left: 4px; }
.call { padding: 0 8px 0 11px; }
.share { padding: 0 13px; }
.plain { gap: 8px; padding-left: 6px; font-size: 24px; font-weight: 600; }
.plain + .plain { margin: 0 5px 0 14px; color: var(--icon); }

/* View tabs */
.tabs { display: flex; align-items: center; gap: 24px; height: 66px; margin-top: 7px; font-size: 21px; font-weight: 600; }
.tabs .vline { margin: 0 -2px; }
.tab { position: relative; display: flex; align-items: center; gap: 9px; height: 68px; border-top: 4px solid transparent; border-bottom: 4px solid transparent; margin-bottom: -2px; }
.tab.active { padding: 0 10px; margin-right: -12px; border-bottom-color: var(--ink); color: var(--ink); }
.tab-plus { margin-right: 3px; }
.cal-ico { width: 26px; height: 23px; border-radius: 5px; background: #f76808; color: #fff; font-size: 13px; line-height: 22px; font-weight: 700; }
.cal-ico::before { left: 5px; width: 4px; background: #f76808; box-shadow: 12px 0 0 #f76808; }

/* Feed */
.feed { position: relative; flex: 1; min-height: 0; display: flex; }
.feed-scroll { flex: 1; min-width: 0; padding-top: 54px; }
.day { display: flex; align-items: center; padding-right: 4px; }
.day::before, .day::after { content: ""; flex: 1; height: 2px; background: var(--line); }
.day-pill { height: 59px; padding: 0 19px; gap: 14px; border: 1px solid #e7e4ea; border-radius: 30px; font-size: 24px; font-weight: 600; }
.messages { display: grid; gap: 29px; padding: 45px 126px 0 45px; }
.msg { display: flex; gap: 15px; }
.msg-side { flex: none; width: 60px; display: flex; flex-direction: column; }
.thread-line { flex: 1; width: 24px; margin: 15px 0 24px 29px; border: 3px solid #efedf0; border-top: 0; border-right: 0; border-bottom-left-radius: 24px; }
.msg-body { flex: 1; min-width: 0; color: var(--ink); }
.msg-body h3 { padding-bottom: 3px; font-weight: 600; }
.msg-body time { margin-left: 8px; color: var(--faint); font-size: 22px; font-weight: 400; }
.msg-body p { line-height: 39px; }
.msg-body p a { color: var(--violet); }
.reactions { display: flex; align-items: center; gap: 14px; padding: 14px 0 12px; }
.reaction { width: 79px; height: 48px; gap: 8px; margin-left: -2px; border: 2px solid var(--violet); border-radius: 24px; background: #f1effc; color: var(--violet); font-size: 22px; }
.thumb-ico { width: 29px; height: 30px; }
.react { width: 45px; height: 45px; border-radius: 50%; background: #efedf0; color: var(--text); }
.thread { gap: 14px; padding: 21px 0 11px 3px; font-size: 22px; color: var(--faint); }
.thread b { color: var(--text); font-size: 21px; font-weight: 600; }
.float-tools { position: absolute; top: 20px; right: 23px; width: 61px; padding: 2px 0; border: 1px solid #e7e4ea; border-radius: 18px; background: #fefefe; color: var(--icon); }
.float-tools button { width: 57px; height: 56px; }

/* Composer */
.composer { flex: none; margin: 0 46px 46px 45px; border: 1px solid var(--line); border-radius: 16px; }
.composer textarea { display: block; width: 100%; height: 50px; margin: 20px 0 17px; padding: 8px 41px; border: 0; outline: 0; resize: none; background: none; overflow: hidden; }
.composer-bar { display: flex; align-items: center; height: 52px; margin: 0 18px 16px 16px; color: var(--icon); }
.composer-bar button { width: 56px; height: 52px; }
.composer-bar .vline { margin: 0 15px; }
.composer-bar .tight { margin: 0 3px; }
.composer-bar .add { width: 52px; border-radius: 50%; background: #f0eef0; color: var(--text); }
.kind { position: relative; display: flex; align-items: center; width: 147px; margin-right: 2px; color: var(--text); font-size: 21px; font-weight: 600; }
.kind select { width: 100%; height: 45px; padding: 0 15px; border: 0; border-radius: 12px; appearance: none; background: #f0eef0; }
.kind .ico { position: absolute; right: 12px; pointer-events: none; }
.composer-bar .send { margin-left: auto; width: 52px; border-radius: 10px; background: #6550ec; color: #fff; }
```
